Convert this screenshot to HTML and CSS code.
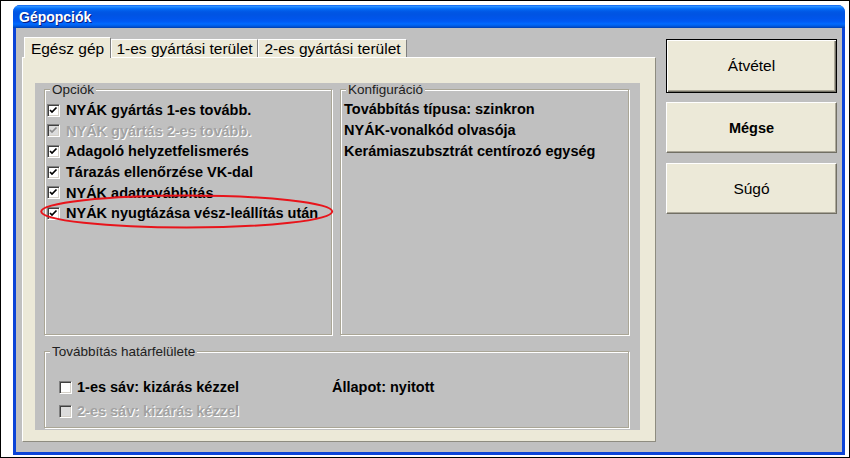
FILE: index.html
```html
<!DOCTYPE html>
<html lang="hu">
<head>
<meta charset="utf-8">
<title>Gépopciók</title>
<link rel="stylesheet" href="styles.css">
</head>
<body>
<div class="screen">
  <div class="window">
    <div class="titlebar">Gépopciók</div>
    <div class="client">
      <div class="main">
        <div class="tabs">
          <div class="tab tab1 active">Egész gép</div>
          <div class="tab tab2">1-es gyártási terület</div>
          <div class="tab tab3">2-es gyártási terület</div>
        </div>
        <div class="panel">
          <div class="page">
            <div class="top-row">
              <fieldset class="group options">
                <legend>Opciók</legend>
                <div class="rows opt-rows">
                  <div class="row"><span class="cb checked"><svg viewBox="0 0 11 11"><polyline points="2,5 4,7 8.5,2.5"/></svg></span><span class="lbl">NYÁK gyártás 1-es tovább.</span></div>
                  <div class="row disabled"><span class="cb checked dis"><svg viewBox="0 0 11 11"><polyline points="2,5 4,7 8.5,2.5"/></svg></span><span class="lbl">NYÁK gyártás 2-es tovább.</span></div>
                  <div class="row"><span class="cb checked"><svg viewBox="0 0 11 11"><polyline points="2,5 4,7 8.5,2.5"/></svg></span><span class="lbl">Adagoló helyzetfelismerés</span></div>
                  <div class="row"><span class="cb checked"><svg viewBox="0 0 11 11"><polyline points="2,5 4,7 8.5,2.5"/></svg></span><span class="lbl">Tárazás ellenőrzése VK-dal</span></div>
                  <div class="row"><span class="cb checked"><svg viewBox="0 0 11 11"><polyline points="2,5 4,7 8.5,2.5"/></svg></span><span class="lbl">NYÁK adattovábbítás</span></div>
                  <div class="row"><span class="cb checked"><svg viewBox="0 0 11 11"><polyline points="2,5 4,7 8.5,2.5"/></svg></span><span class="lbl">NYÁK nyugtázása vész-leállítás után</span></div>
                </div>
              </fieldset>
              <fieldset class="group config">
                <legend>Konfiguráció</legend>
                <div class="rows cfg-rows">
                  <div class="crow">Továbbítás típusa: szinkron</div>
                  <div class="crow">NYÁK-vonalkód olvasója</div>
                  <div class="crow">Kerámiaszubsztrát centírozó egység</div>
                </div>
              </fieldset>
            </div>
            <fieldset class="group transfer">
              <legend>Továbbítás határfelülete</legend>
              <div class="rows tr-rows">
                <div class="trow">
                  <div class="row item"><span class="cb"></span><span class="lbl">1-es sáv: kizárás kézzel</span></div>
                  <span class="lbl status">Állapot: nyitott</span>
                </div>
                <div class="trow">
                  <div class="row item disabled"><span class="cb dis"></span><span class="lbl">2-es sáv: kizárás kézzel</span></div>
                </div>
              </div>
            </fieldset>
          </div>
        </div>
      </div>
      <div class="buttons">
        <div class="btn default">Átvétel</div>
        <div class="btn bold">Mégse</div>
        <div class="btn">Súgó</div>
      </div>
    </div>
  </div>
  <svg class="mark" width="298" height="38" viewBox="0 0 298 38"><ellipse cx="148.7" cy="18.5" rx="145.5" ry="16" fill="none" stroke="#e8141b" stroke-width="2"/></svg>
</div>
</body>
</html>
```

FILE: styles.css
```css
* { box-sizing: border-box; }
html, body { margin: 0; padding: 0; background: #fff; }
body { font-family: "Liberation Sans", Arial, sans-serif; color: #000; }

.screen {
  position: relative;
  width: 850px;
  height: 458px;
  border: 1px solid #000;
  background: #fff;
  padding: 4px 0 0 12px;
}

.window {
  width: 832px;
  height: 450px;
  background: #0b44d8;
  border-radius: 7px 7px 0 0;
  display: flex;
  flex-direction: column;
  overflow: hidden;
}

.titlebar {
  height: 23px;
  flex: none;
  background: linear-gradient(to bottom, #0058ee 0%, #3593ff 5%, #288eff 8%, #127dff 12%, #036ffc 16%, #0262ee 22%, #0057e5 30%, #0054e3 40%, #0055eb 60%, #005bf5 72%, #026afe 82%, #0062ef 88%, #0052d6 94%, #0040ab 100%);
  color: #fff;
  font-weight: bold;
  font-size: 14px;
  padding-left: 6px;
  display: flex;
  align-items: center;
  text-shadow: 1px 1px 0 #0a1c80;
}

.client {
  flex: 1;
  margin: 0 3px 3px;
  background: #c0c0c0;
  display: flex;
}

.main {
  width: 640px;
  padding: 9px 0 0 6px;
}

.tabs {
  display: flex;
  height: 20px;
  padding-left: 2px;
  align-items: flex-end;
  position: relative;
  z-index: 1;
}

.tab {
  flex: none;
  height: 18px;
  background: #ece9d8;
  border-top: 1px solid #fff;
  border-left: 1px solid #fff;
  border-right: 1px solid #808080;
  font-size: 15.5px;
  line-height: 18px;
  text-align: center;
  white-space: nowrap;
}
.tab.active {
  height: 21px;
  margin-bottom: -1px;
  padding-top: 2px;
}
.tab1 { width: 87px; }
.tab2 { width: 147px; }
.tab3 { width: 149px; }

.panel {
  width: 634px;
  height: 385px;
  background: #ece9d8;
  border: 1px solid;
  border-color: #fff #8e8c80 #8e8c80 #fff;
  padding: 25px 15px 11px 12px;
}

.page {
  width: 605px;
  height: 347px;
  background: #c0c0c0;
  padding-left: 9px;
}

.top-row {
  display: flex;
  gap: 8px;
}

.group {
  margin: 0;
  padding: 0;
  min-width: 0;
  border: 1px solid #aaa696;
  box-shadow: inset 1px 1px 0 #fff, 1px 1px 0 #fff;
}
.group legend {
  margin-left: 5px;
  padding: 0 2px;
  font-size: 13.5px;
  line-height: 13px;
  color: #202020;
  background: #c0c0c0;
}

.options { width: 288px; height: 252px; }
.config { width: 289px; height: 252px; }
.transfer { width: 585px; height: 83px; margin-top: 10px; }

.opt-rows { padding-top: 4px; }
.row {
  display: flex;
  align-items: center;
  height: 20.6px;
  padding-left: 2px;
  gap: 6px;
}
.lbl {
  font-weight: bold;
  font-size: 14.5px;
  white-space: nowrap;
}
.disabled .lbl {
  color: #a2a2a2;
  text-shadow: 1px 1px 0 #fff;
}

.cb {
  flex: none;
  width: 13px;
  height: 13px;
  border: 1px solid;
  border-color: #808080 #fff #fff #808080;
  box-shadow: inset 1px 1px 0 #404040, inset -1px -1px 0 #d4d0c8;
  background: #fff;
  display: block;
}
.cb svg {
  display: block;
  width: 11px;
  height: 11px;
}
.cb polyline {
  fill: none;
  stroke: #000;
  stroke-width: 1.7;
}
.cb.dis { background: #dcdcdc; }
.cb.dis polyline { stroke: #8a8a8a; }

.cfg-rows { padding: 2px 0 0 3px; }
.crow {
  height: 21px;
  display: flex;
  align-items: center;
  font-weight: bold;
  font-size: 14.5px;
  white-space: nowrap;
}

.tr-rows { padding: 17px 0 0 14px; }
.trow {
  display: flex;
  align-items: center;
  height: 24px;
}
.trow .item {
  width: 273px;
  height: 24px;
  padding-left: 0;
  gap: 5px;
}

.buttons {
  width: 171px;
  margin-left: 10px;
  padding-top: 11px;
  display: flex;
  flex-direction: column;
}
.btn {
  height: 51px;
  background: #ece9d8;
  border: 1px solid;
  border-color: #fff #716f64 #716f64 #fff;
  box-shadow: inset -1px -1px 0 #aca899;
  display: flex;
  align-items: center;
  justify-content: center;
  font-size: 15.5px;
  margin-top: 10px;
}
.btn.default {
  height: 54px;
  margin-top: 0;
  border: 1px solid #000;
  box-shadow: inset 1px 1px 0 #fff, inset -1px -1px 0 #716f64, inset -2px -2px 0 #aca899;
}
.btn.default + .btn { margin-top: 9px; }
.btn.bold { font-weight: bold; font-size: 14.5px; }

.mark {
  position: absolute;
  left: 37px;
  top: 192px;
}
```
